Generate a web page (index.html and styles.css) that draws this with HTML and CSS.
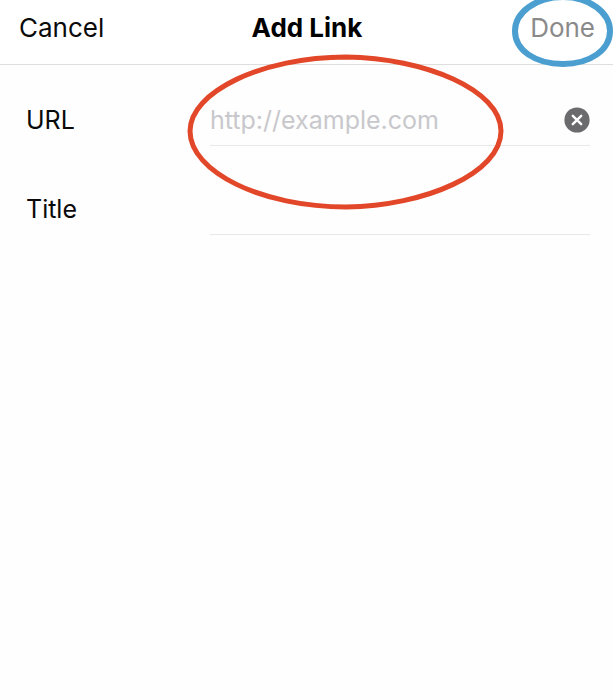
FILE: index.html
```html
<!DOCTYPE html>
<html lang="en">
  <head>
    <meta charset="UTF-8" />
    <meta name="viewport" content="width=device-width, initial-scale=1.0" />
    <title>Add Link</title>
    <link rel="stylesheet" href="styles.css">
  </head>
  <body>
    <nav class="navbar">
      <div class="nav-cancel">Cancel</div>
      <div class="nav-title">Add Link</div>
      <div class="nav-done">Done</div>
    </nav>

    <div class="form">
      <div class="row">
        <div class="label">URL</div>
        <div class="field">
          <span class="placeholder">http://example.com</span>
          <svg class="clear" viewBox="0 0 26 26" width="26" height="26">
            <circle cx="13" cy="13" r="12.6" fill="#6b6b6d" />
            <path d="M8.8 8.8 L17.2 17.2 M17.2 8.8 L8.8 17.2" stroke="#fff" stroke-width="2.4" stroke-linecap="round" />
          </svg>
        </div>
      </div>
      <div class="row">
        <div class="label">Title</div>
        <div class="field"></div>
      </div>
    </div>

    <!-- hand drawn marks on top of the screenshot -->
    <svg class="marks" viewBox="0 0 613 700" width="613" height="700">
      <path class="mark-red" d="M346 57 C 425 58 501 90 501 131 C 501 173 425 206 346 207 C 262 207 190 172 190 131 C 190 92 262 57 346 57 Z" />
      <path class="mark-blue" d="M563 -3 C 590 -3 610 13 610 31 C 610 50 590 64 563 64 C 535 64 515 50 515 31 C 515 13 535 -3 563 -3 Z" />
    </svg>
  </body>
</html>
```

FILE: styles.css
```css
body {
  font-family: "Inter", "Liberation Sans", sans-serif;
  background: #fefefe;
  margin: 0;
  padding: 0;
  position: relative;
  width: 613px;
  height: 700px;
  overflow: hidden;
  color: #0a0a0a;
}
.navbar {
  height: 65px;
  box-sizing: border-box;
  border-bottom: 1px solid #dedede;
  background: #fff;
  display: grid;
  grid-template-columns: 1fr auto 1fr;
  align-items: center;
  padding: 0 18px 9px 19px;
  font-size: 26px;
}
.nav-title {
  font-weight: 700;
  color: #000;
}
.nav-done {
  text-align: right;
  color: #8a8a8a;
}
.form {
  padding-left: 26px;
}
.row {
  display: flex;
  height: 89px;
  margin-right: 23px;
}
.row:first-child {
  height: 81px;
}
.label {
  width: 184px;
  font-size: 25px;
  line-height: 30px;
  align-self: flex-end;
  padding-bottom: 11px;
}
.field {
  flex: 1;
  display: flex;
  align-items: flex-end;
  justify-content: space-between;
  border-bottom: 1px solid #e8e8e8;
  padding-bottom: 10px;
}
.placeholder {
  font-size: 25px;
  line-height: 30px;
  color: #c8c8cc;
}
.clear {
  margin-bottom: 2px;
}
.marks {
  position: absolute;
  left: 0;
  top: 0;
  fill: none;
}
.mark-red {
  stroke: #e2472a;
  stroke-width: 5;
}
.mark-blue {
  stroke: #4a9fd0;
  stroke-width: 6;
}
```
